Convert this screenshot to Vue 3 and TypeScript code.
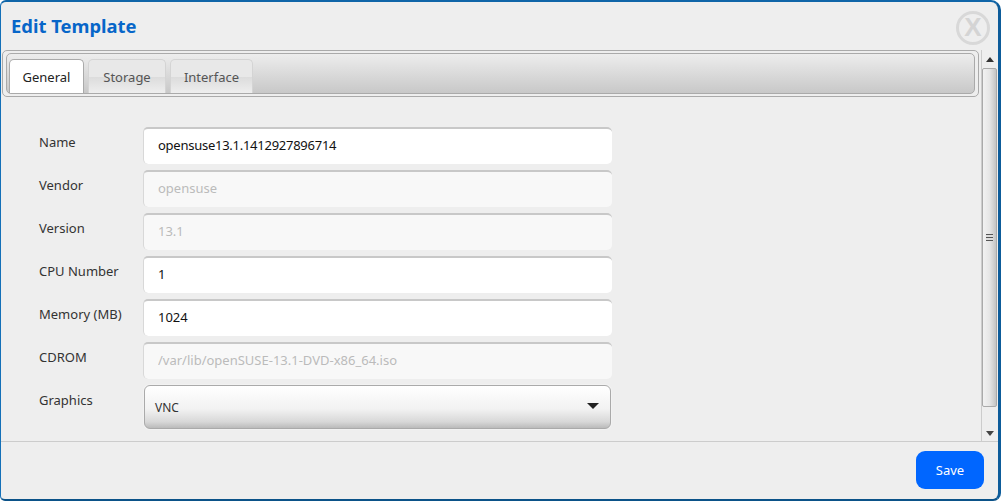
<script setup lang="ts">
interface Field {
  label: string
  value: string
  disabled: boolean
}

const tabs = ['General', 'Storage', 'Interface']

const fields: Field[] = [
  { label: 'Name', value: 'opensuse13.1.1412927896714', disabled: false },
  { label: 'Vendor', value: 'opensuse', disabled: true },
  { label: 'Version', value: '13.1', disabled: true },
  { label: 'CPU Number', value: '1', disabled: false },
  { label: 'Memory (MB)', value: '1024', disabled: false },
  { label: 'CDROM', value: '/var/lib/openSUSE-13.1-DVD-x86_64.iso', disabled: true },
]
</script>

<template>
  <div class="window">
    <header class="header">
      <h1 class="title">Edit Template</h1>
      <span class="close">X</span>
    </header>

    <div class="body">
      <div class="main">
        <div class="tabs-frame">
          <div class="tabs-bar">
            <button
              v-for="(tab, i) in tabs"
              :key="tab"
              class="tab"
              :class="{ active: i === 0 }"
            >
              {{ tab }}
            </button>
          </div>
        </div>

        <form class="form">
          <div v-for="f in fields" :key="f.label" class="row">
            <label class="label">{{ f.label }}</label>
            <input class="input" :value="f.value" :disabled="f.disabled" />
          </div>
          <div class="row">
            <label class="label">Graphics</label>
            <div class="select">
              <span>VNC</span>
              <span class="caret"></span>
            </div>
          </div>
        </form>
      </div>

      <div class="scrollbar">
        <span class="arrow up"></span>
        <div class="thumb">
          <span class="grip"></span>
        </div>
        <span class="arrow down"></span>
      </div>
    </div>

    <footer class="footer">
      <button class="save">Save</button>
    </footer>
  </div>
</template>

<style>
html,
body {
  margin: 0;
  background: #fff;
}
</style>

<style scoped>
.window {
  box-sizing: border-box;
  width: 1001px;
  height: 501px;
  display: flex;
  flex-direction: column;
  background: #eee;
  border-style: solid;
  border-color: #0f65a8 #0d5c9a #0b5288 #1470b8;
  border-width: 2px 3px 2px 1px;
  border-radius: 6px 10px 8px 5px;
  font-family: "Noto Sans", "Open Sans", sans-serif;
  color: #333;
}

.header {
  box-sizing: border-box;
  height: 48px;
  flex-shrink: 0;
  display: flex;
  align-items: center;
  justify-content: space-between;
  padding: 0 8px 0 10px;
}

.title {
  margin: 0 0 1px;
  font-size: 18.4px;
  font-weight: 700;
  color: #0766c9;
}

.close {
  box-sizing: border-box;
  width: 34px;
  height: 34px;
  margin-top: 3px;
  border: 3px solid #d8d8d8;
  border-radius: 50%;
  display: flex;
  align-items: center;
  justify-content: center;
  font-family: "Liberation Sans", sans-serif;
  font-size: 26px;
  font-weight: 700;
  color: #d4d4d4;
}

.body {
  flex: 1;
  min-height: 0;
  display: flex;
  padding: 0 0 0 1px;
}

.main {
  flex: 1;
  min-width: 0;
}

.tabs-frame {
  box-sizing: border-box;
  width: 977px;
  height: 47px;
  padding: 2px 3px;
  border: 1px solid #aaa;
  border-radius: 5px;
}

.tabs-bar {
  box-sizing: border-box;
  height: 41px;
  padding: 4px 2px 0;
  display: flex;
  align-items: flex-end;
  gap: 4px;
  border: 1px solid #aaa;
  border-radius: 5px;
  background: linear-gradient(#ededed, #c8c8c8);
}

.tab {
  box-sizing: border-box;
  height: 34px;
  padding: 0;
  border: 1px solid #d4d4d4;
  border-bottom: 0;
  border-radius: 5px 5px 0 0;
  background: linear-gradient(#e8e8e8 50%, #dcdcdc 52%, #eee);
  font: inherit;
  font-size: 13px;
  color: #555;
  width: 78px;
}

.tab:nth-child(3) {
  width: 83px;
}

.tab.active {
  width: 75px;
  border-color: #aaa;
  background: #fff;
  color: #222;
}

.form {
  padding: 30px 0 0 37px;
  display: flex;
  flex-direction: column;
  gap: 6px;
}

.row {
  display: flex;
  align-items: flex-start;
}

.label {
  width: 104px;
  padding-top: 6px;
  font-size: 13px;
  color: #333;
}

.input {
  box-sizing: border-box;
  width: 469px;
  height: 37px;
  padding: 0 14px 3px;
  border: 0;
  border-top: 2px solid #c8c8c8;
  border-left: 1px solid #d8d8d8;
  border-radius: 5px;
  outline: none;
  background: #fff;
  font-family: inherit;
  font-size: 13px;
  color: #111;
}

.row:first-child .input {
  letter-spacing: -0.26px;
}

.input:disabled {
  background: #f8f8f8;
  color: #bbb;
}

.select {
  box-sizing: border-box;
  width: 467px;
  height: 44px;
  margin: 0 0 0 1px;
  padding: 0 11px 0 10px;
  display: flex;
  align-items: center;
  justify-content: space-between;
  border: 1px solid #aaa;
  border-radius: 6px;
  background: linear-gradient(#fff, #f2f2f2 55%, #d8d8d8 85%, #bbb);
  box-shadow: 0 0 2px #fff;
  font-size: 12px;
  color: #333;
}

.caret {
  margin: 0 0 3px;
  border-style: solid;
  border-width: 6px 6px 0;
  border-color: #222 transparent transparent;
}

.scrollbar {
  box-sizing: border-box;
  width: 16px;
  margin-right: 1px;
  display: flex;
  flex-direction: column;
  align-items: center;
  justify-content: space-between;
  border-left: 1px solid #ccc;
}

.arrow {
  flex-shrink: 0;
  border-style: solid;
}

.arrow.up {
  margin-top: 7px;
  border-width: 0 4px 5px;
  border-color: transparent transparent #333;
}

.arrow.down {
  margin-bottom: 5px;
  border-width: 5px 4px 0;
  border-color: #444 transparent transparent;
}

.thumb {
  box-sizing: border-box;
  height: 339px;
  margin-top: -18px;
  width: 15px;
  display: flex;
  align-items: center;
  justify-content: center;
  border: 1px solid #aaa;
  border-radius: 2px;
  background: linear-gradient(90deg, #f2f2f2, #e6e6e6 50%, #c4c4c4);
}

.grip {
  width: 7px;
  height: 7px;
  background: repeating-linear-gradient(#555 0 1px, #ddd 1px 3px);
}

.footer {
  box-sizing: border-box;
  height: 58px;
  flex-shrink: 0;
  display: flex;
  justify-content: flex-end;
  padding: 9px 14px 0 0;
  border-top: 1px solid #ccc;
}

.save {
  width: 68px;
  height: 38px;
  border: 0;
  border-radius: 9px;
  background: #0066ff;
  color: #fff;
  font-family: inherit;
  font-size: 13px;
}
</style>
